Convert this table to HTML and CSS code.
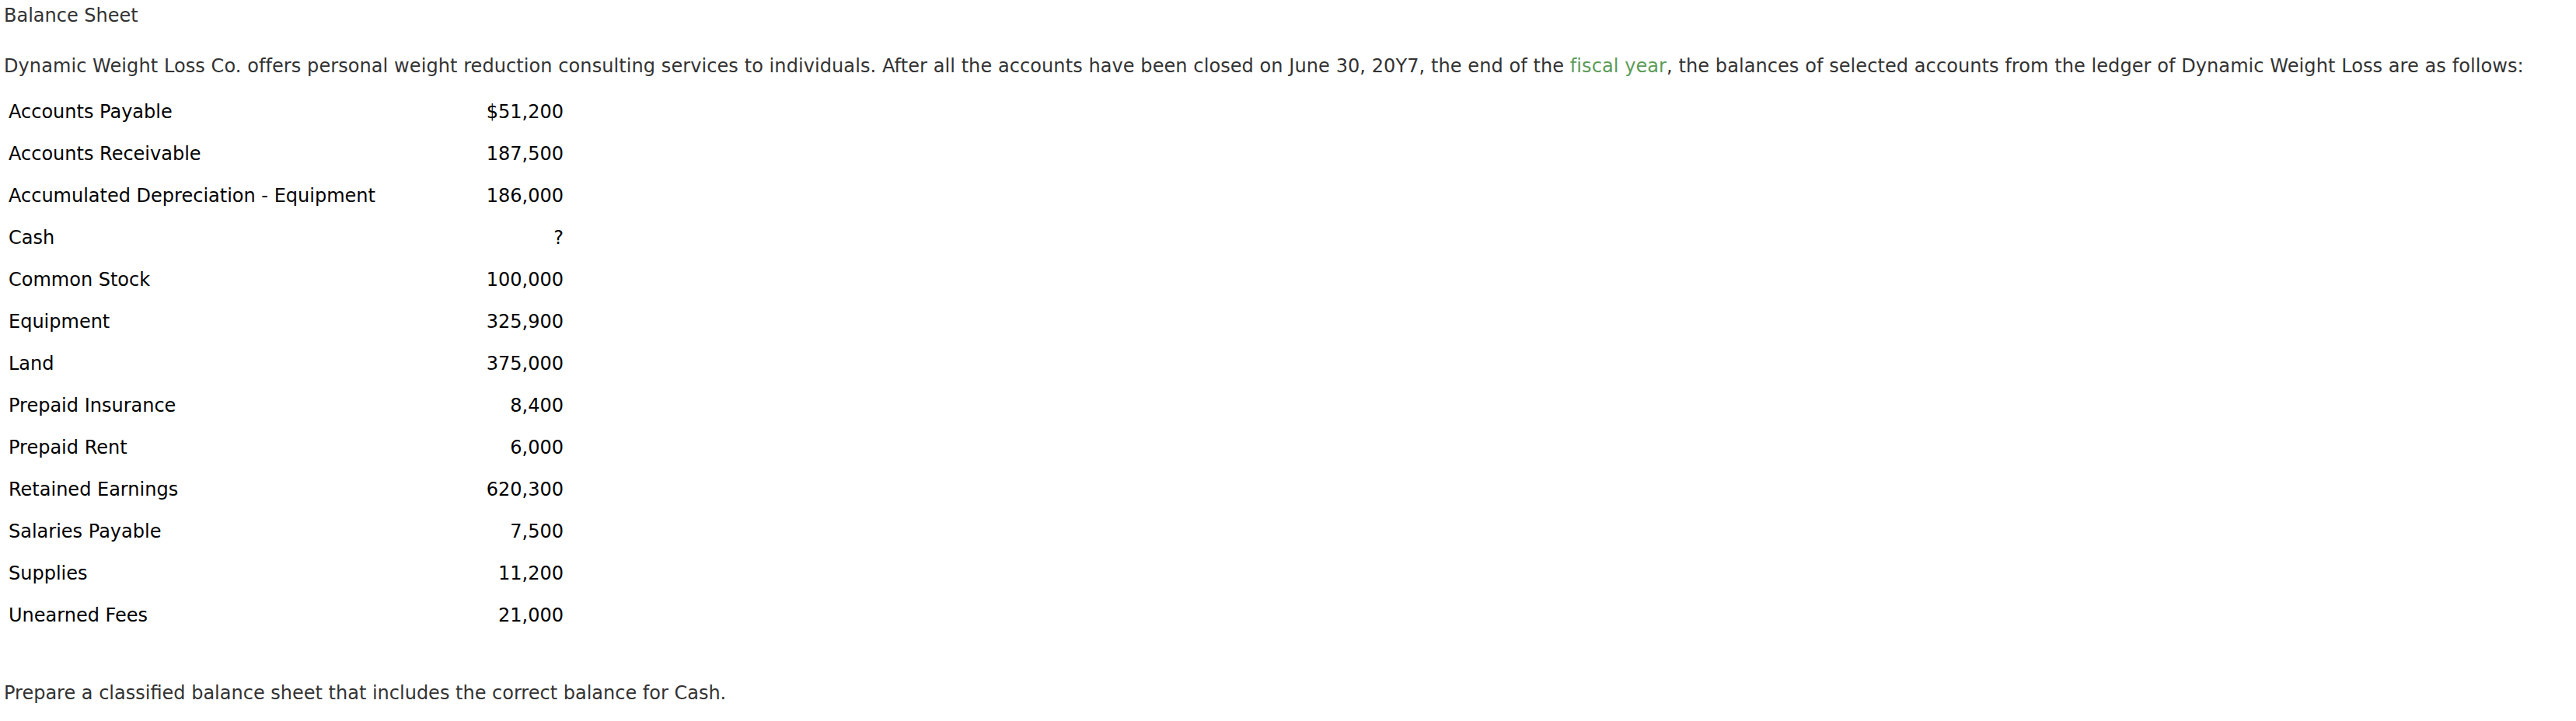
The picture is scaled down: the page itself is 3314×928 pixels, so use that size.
FILE: index.html
```html
<!DOCTYPE html>
<html lang="en">
<head>
<meta charset="utf-8">
<title>Balance Sheet</title>
<link rel="stylesheet" href="styles.css">
</head>
<body>
<div class="page">
  <div class="title">Balance Sheet</div>
  <p class="intro">Dynamic Weight Loss Co. offers personal weight reduction consulting services to individuals. After all the accounts have been closed on June 30, 20Y7, the end of the <span class="term">fiscal year</span>, the balances of selected accounts from the ledger of Dynamic Weight Loss are as follows:</p>
  <table class="ledger">
    <tbody>
      <tr><td class="acct">Accounts Payable</td><td class="amt">$51,200</td></tr>
      <tr><td class="acct">Accounts Receivable</td><td class="amt">187,500</td></tr>
      <tr><td class="acct">Accumulated Depreciation - Equipment</td><td class="amt">186,000</td></tr>
      <tr><td class="acct">Cash</td><td class="amt">?</td></tr>
      <tr><td class="acct">Common Stock</td><td class="amt">100,000</td></tr>
      <tr><td class="acct">Equipment</td><td class="amt">325,900</td></tr>
      <tr><td class="acct">Land</td><td class="amt">375,000</td></tr>
      <tr><td class="acct">Prepaid Insurance</td><td class="amt">8,400</td></tr>
      <tr><td class="acct">Prepaid Rent</td><td class="amt">6,000</td></tr>
      <tr><td class="acct">Retained Earnings</td><td class="amt">620,300</td></tr>
      <tr><td class="acct">Salaries Payable</td><td class="amt">7,500</td></tr>
      <tr><td class="acct">Supplies</td><td class="amt">11,200</td></tr>
      <tr><td class="acct">Unearned Fees</td><td class="amt">21,000</td></tr>
    </tbody>
  </table>
  <p class="task">Prepare a classified balance sheet that includes the correct balance for Cash.</p>
</div>
</body>
</html>
```
FILE: styles.css
```css
html, body {
  margin: 0;
  padding: 0;
  background: #ffffff;
}
.page {
  padding: 6px 5px 0 5px;
  font-family: "DejaVu Sans", Verdana, sans-serif;
  font-size: 24px;
  color: #333333;
}
.title {
  line-height: 28px;
}
.intro {
  margin: 37px 0 0 0;
  line-height: 28px;
  letter-spacing: 0.08px;
  white-space: nowrap;
}
.term {
  color: #5c9c57;
}
.ledger {
  margin-top: 18px;
  width: 726px;
  border-collapse: collapse;
  border-spacing: 0;
  color: #000000;
}
.ledger td {
  height: 54px;
  padding: 0 6px;
  line-height: 28px;
  vertical-align: middle;
}
.acct {
  text-align: left;
}
.amt {
  text-align: right;
  width: 180px;
}
.task {
  margin: 59px 0 0 0;
  line-height: 28px;
}
```
